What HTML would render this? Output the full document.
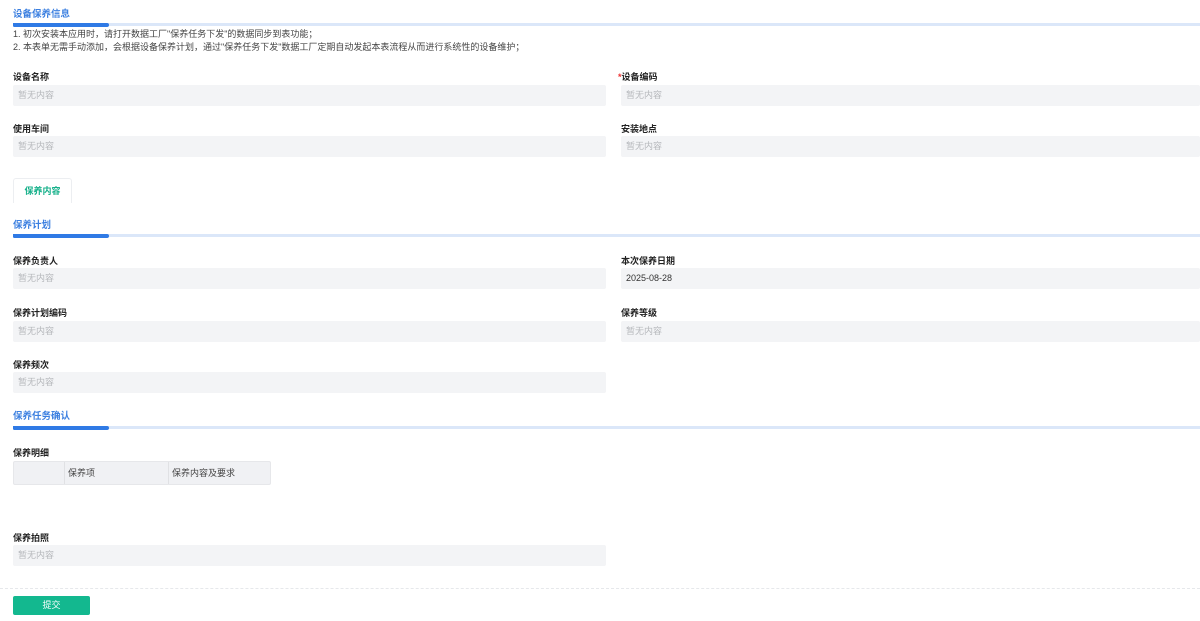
<!DOCTYPE html><html><head><meta charset="utf-8"><style>
body{margin:0;width:1200px;height:621px;background:#fff;position:relative;overflow:hidden;font-family:"Liberation Sans","Noto Sans CJK SC",sans-serif;}
.a{position:absolute}
.h{color:#3b7fe0;font-size:9.5px;left:13px;font-weight:bold}
.bar{left:13px;right:0;height:3px;background:#dbe7f9}
.bar i{position:absolute;left:0;top:-0.5px;width:96px;height:4px;background:#2f7ae5;border-radius:0 3px 3px 2px}
.l{font-size:9px;font-weight:bold;color:#222}
.in{background:#f3f4f6;height:21px;font-size:9px;color:#b5b7bb;line-height:21px;padding-left:5px;box-sizing:border-box;border-radius:2px}
.n{font-size:9px;color:#444;left:13px}
</style></head><body>
<div class="a h" style="top:6px">设备保养信息</div>
<div class="a bar" style="top:23px"><i></i></div>
<div class="a n" style="top:27px">1. 初次安装本应用时，请打开数据工厂"保养任务下发"的数据同步到表功能；</div>
<div class="a n" style="top:40px">2. 本表单无需手动添加，会根据设备保养计划，通过"保养任务下发"数据工厂定期自动发起本表流程从而进行系统性的设备维护；</div>

<div class="a l" style="left:13px;top:70px">设备名称</div>
<div class="a in" style="left:13px;top:85px;width:593px">暂无内容</div>
<div class="a l" style="left:618px;top:70px"><span style="color:#e33">*</span>设备编码</div>
<div class="a in" style="left:621px;top:85px;width:579px">暂无内容</div>
<div class="a l" style="left:13px;top:122px">使用车间</div>
<div class="a in" style="left:13px;top:136px;width:593px">暂无内容</div>
<div class="a l" style="left:621px;top:122px">安装地点</div>
<div class="a in" style="left:621px;top:136px;width:579px">暂无内容</div>

<div class="a" style="left:13px;top:178px;width:57px;height:24px;border:1px solid #eceef1;border-bottom:none;border-radius:3px 3px 0 0;text-align:center;line-height:24px;font-size:9px;font-weight:bold;color:#16b08a">保养内容</div>

<div class="a h" style="top:217px">保养计划</div>
<div class="a bar" style="top:234px"><i></i></div>
<div class="a l" style="left:13px;top:254px">保养负责人</div>
<div class="a in" style="left:13px;top:268px;width:593px">暂无内容</div>
<div class="a l" style="left:621px;top:254px">本次保养日期</div>
<div class="a in" style="left:621px;top:268px;width:579px;color:#333">2025-08-28</div>
<div class="a l" style="left:13px;top:306px">保养计划编码</div>
<div class="a in" style="left:13px;top:321px;width:593px">暂无内容</div>
<div class="a l" style="left:621px;top:306px">保养等级</div>
<div class="a in" style="left:621px;top:321px;width:579px">暂无内容</div>
<div class="a l" style="left:13px;top:358px">保养频次</div>
<div class="a in" style="left:13px;top:372px;width:593px">暂无内容</div>

<div class="a h" style="top:408px">保养任务确认</div>
<div class="a bar" style="top:426px"><i></i></div>
<div class="a l" style="left:13px;top:446px">保养明细</div>
<div class="a" style="left:13px;top:461px;width:258px;height:24px;background:#f0f1f4;border:1px solid #e6e7ea;box-sizing:border-box;border-radius:2px;font-size:9px;color:#444">
<div class="a" style="left:50px;top:0;height:22px;border-left:1px solid #e0e1e4;padding-left:3px;line-height:22px">保养项</div>
<div class="a" style="left:154px;top:0;height:22px;border-left:1px solid #e0e1e4;padding-left:3px;line-height:22px">保养内容及要求</div>
</div>
<div class="a l" style="left:13px;top:531px">保养拍照</div>
<div class="a in" style="left:13px;top:545px;width:593px">暂无内容</div>

<div class="a" style="left:0;right:0;top:588px;border-top:1px dashed #e6e8eb"></div>
<div class="a" style="left:13px;top:596px;width:77px;height:19px;background:#13b88f;border-radius:2px;color:#fff;font-size:9px;text-align:center;line-height:19px">提交</div>
</body></html>
